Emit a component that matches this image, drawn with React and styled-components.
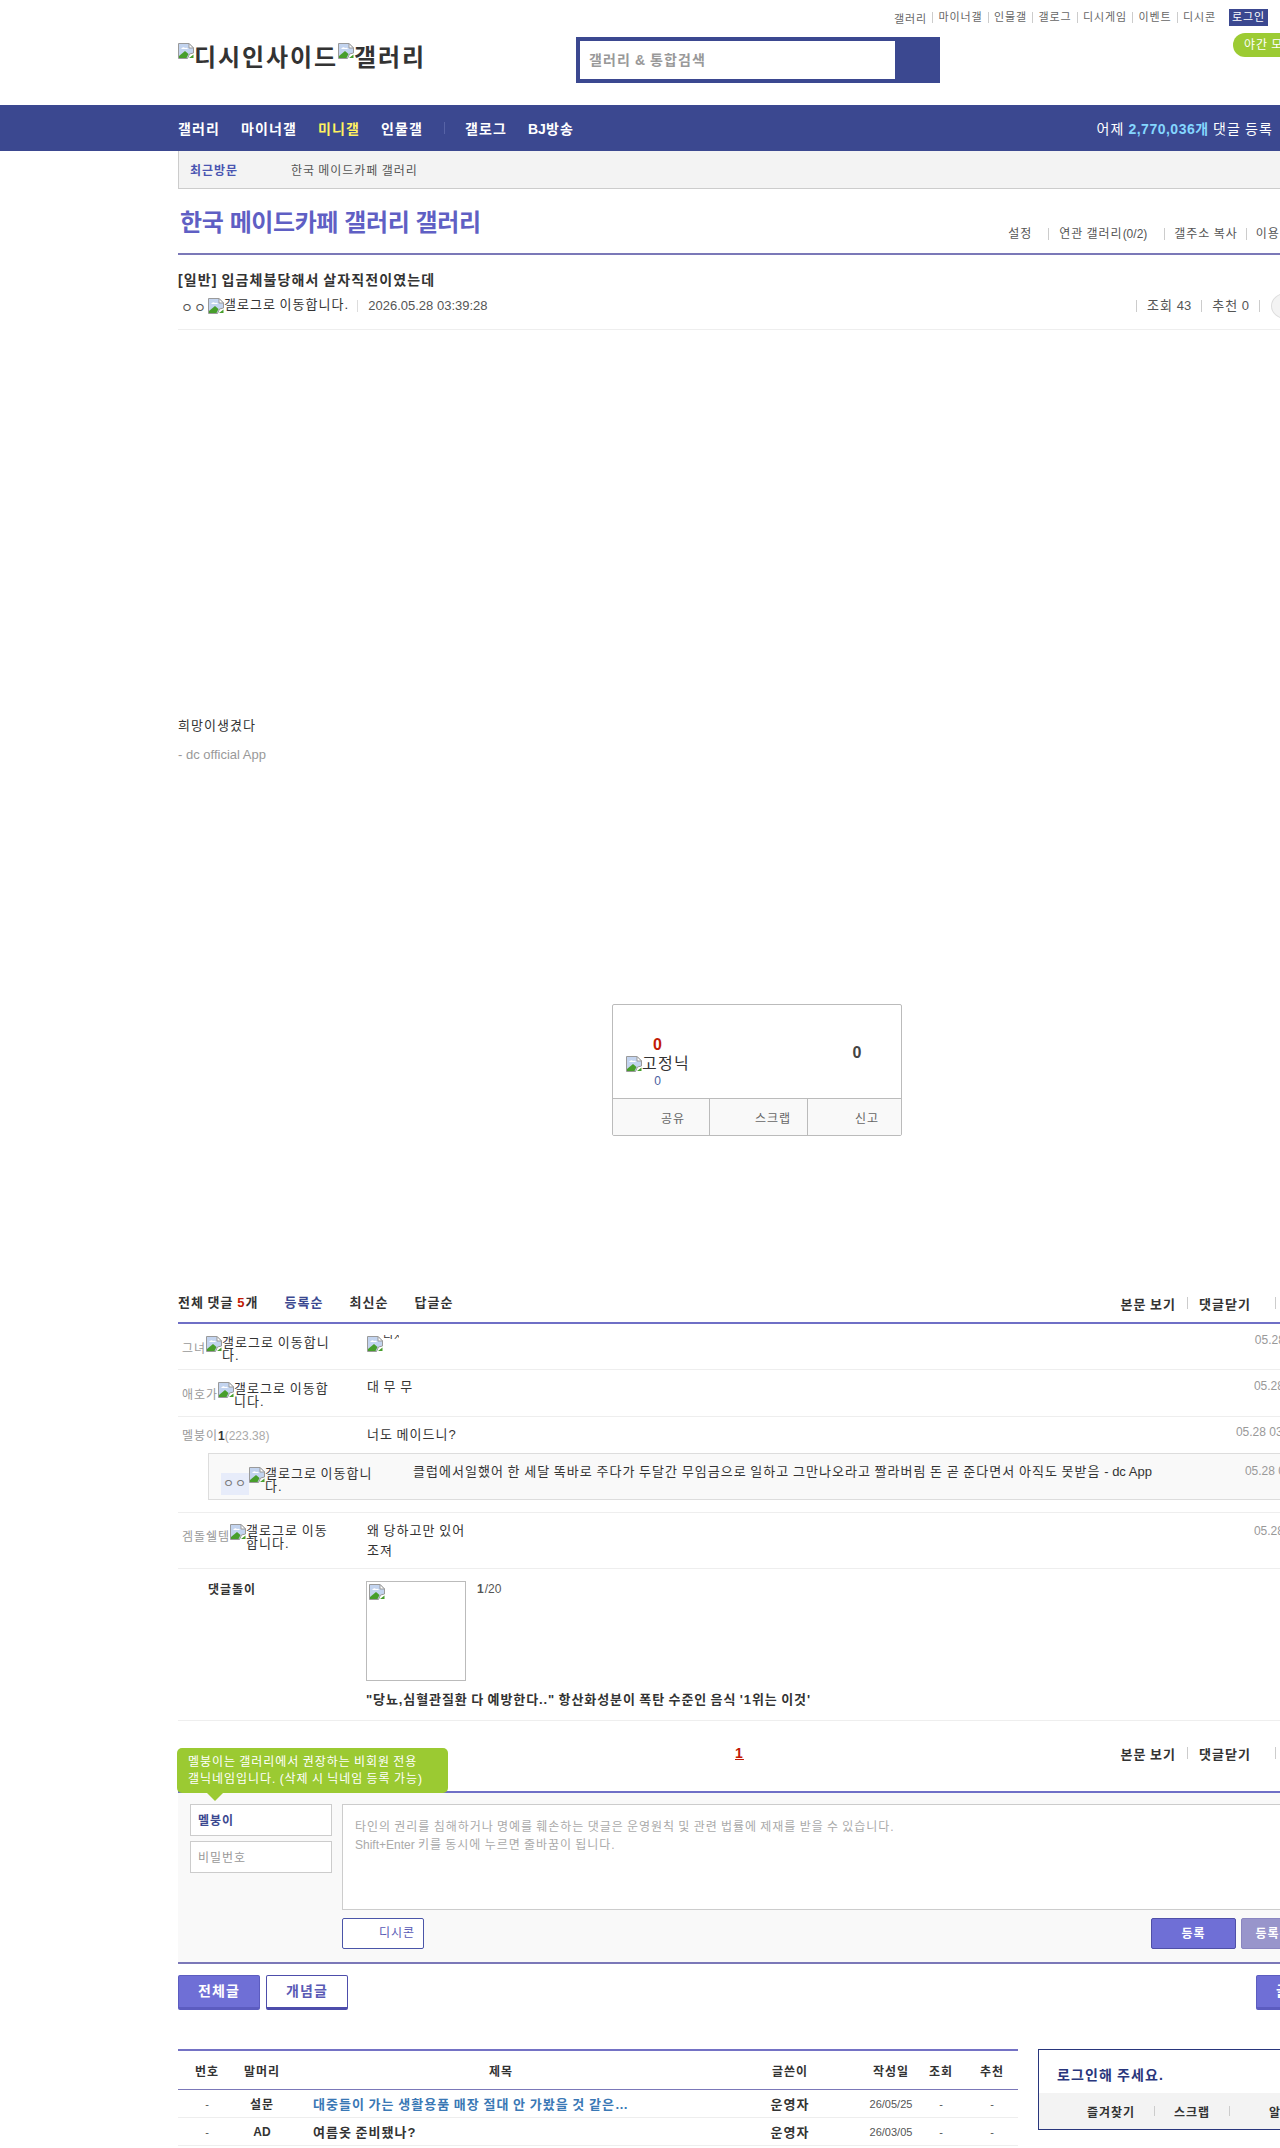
import React from 'react';
import styled, { createGlobalStyle } from 'styled-components';

const GlobalStyle = createGlobalStyle`
    html, body {
        margin: 0;
        padding: 0;
        background: #fff;
        height: 2148px;
        overflow: hidden;
    }
    body {
        font-family: "Liberation Sans", "Noto Sans CJK KR", sans-serif;
        font-size: 12px;
        color: #333;
    }
    /* hangul in the reference sits on a full em, Noto's is .92 */
    * {
        letter-spacing: 0.08em;
        word-spacing: -0.08em;
    }
`;

const Latin = styled.span`
    letter-spacing: 0;
    word-spacing: 0;
`;

const Page = styled.div`
    width: 1280px;
    height: 2148px;
    overflow: hidden;
`;

const Wrap = styled.div`
    width: 1160px;
    margin-left: 178px;
`;

const Header = styled.header`
    height: 105px;
    position: relative;
`;

const TopLinks = styled.ul`
    list-style: none;
    margin: 0;
    padding: 9px 0 0 0;
    width: 1090px;
    height: 17px;
    display: flex;
    align-items: center;
    justify-content: flex-end;
    font-size: 11px;
    color: #666;

    li + li {
        margin-left: 5px;
        padding-left: 5.5px;
        border-left: 1px solid #ccc;
        line-height: 11px;
    }
`;

const LoginButton = styled.span`
    background: #3b4890;
    color: #fff;
    font-size: 11px;
    width: 39px;
    height: 17px;
    line-height: 17px;
    text-align: center;
    margin-left: 13px;
`;

const HeaderMain = styled.div`
    display: flex;
    align-items: flex-start;
    padding-top: 11px;
`;

const Logo = styled.h1`
    margin: 6px 0 0;
    width: 398px;
    display: flex;
    align-items: flex-start;
    font-size: 24px;
    font-weight: bold;
    line-height: 30px;
    color: #333;
`;

const SearchBox = styled.div`
    width: 364px;
    height: 46px;
    box-sizing: border-box;
    background: #3b4890;
    padding: 4px 45px 4px 4px;
`;

const SearchInput = styled.div`
    height: 38px;
    background: #fff;
    padding-left: 9px;
    line-height: 38px;
    font-size: 14px;
    font-weight: bold;
    color: #999;
`;

const NightPill = styled.span`
    position: absolute;
    left: 1055px;
    top: 33px;
    width: 90px;
    height: 24px;
    line-height: 24px;
    padding-left: 11px;
    box-sizing: border-box;
    border-radius: 12px;
    background: #9ccb33;
    color: #fff;
    font-size: 12px;
    white-space: nowrap;
`;

const NavBar = styled.nav`
    height: 46px;
    background: #3b4890;
`;

const NavInner = styled(Wrap)`
    height: 46px;
    display: flex;
    align-items: center;
    font-size: 14px;
    font-weight: bold;
    color: #fff;
`;

const NavItem = styled.span`
    margin-right: 21px;
    color: ${(p) => (p.$active ? '#fff25f' : '#fff')};
`;

const NavDivider = styled.span`
    width: 1px;
    height: 12px;
    background: #5763a6;
    margin-right: 20px;
`;

const NavStat = styled.div`
    margin-left: auto;
    margin-right: 65px;
    font-weight: normal;
    white-space: nowrap;

    b {
        color: #84d6ff;
    }
`;

const StatNumber = styled.span`
    letter-spacing: 0.5px;
`;

const RecentBar = styled.div`
    height: 37px;
    background: #f3f3f3;
    border-left: 1px solid #ccc;
    border-bottom: 1px solid #ccc;
    display: flex;
    align-items: center;
    padding-left: 11px;
    color: #555;
    box-sizing: content-box;

    b {
        width: 101px;
        color: #4a55b1;
    }
`;

const GalleryHead = styled.div`
    height: 66px;
    box-sizing: border-box;
    border-bottom: 2px solid #7b78b8;
    display: flex;
    align-items: flex-start;
    justify-content: space-between;
`;

const GalleryTitle = styled.h2`
    margin: 16px 0 0 2px;
    font-size: 24px;
    line-height: 36px;
    letter-spacing: -0.4px;
    word-spacing: 0;
    color: #5f5fc4;
`;

const GalleryLinks = styled.div`
    display: flex;
    margin-top: 39px;
    margin-right: 31px;
    font-size: 12px;
    color: #555;
    line-height: 16px;
    white-space: nowrap;
`;

const BarLink = styled.span`
    height: 12px;
    margin-left: ${(p) => p.$gap || 10}px;
    padding-left: ${(p) => p.$pad || 10}px;
    border-left: 1px solid #ccc;
    line-height: 12px;
    align-self: center;

    &:first-child {
        margin-left: 0;
    }
`;

const GalleryLink = styled(BarLink)`
    &:first-child {
        border-left: 0;
        padding-left: 0;
    }
`;

const PostHead = styled.div`
    height: 75px;
    box-sizing: border-box;
    border-bottom: 1px solid #eee;
`;

const PostTitle = styled.h3`
    margin: 0;
    padding-top: 15px;
    font-size: 14px;
    line-height: 20px;
    color: #333;
`;

const PostMeta = styled.div`
    margin-top: 7px;
    display: flex;
    align-items: center;
    height: 18px;
    color: #555;
    font-size: 13px;
`;

const Writer = styled.span`
    display: flex;
    align-items: center;
    padding-left: 3px;
    gap: 1px;
`;

const PostDate = styled.span`
    margin-left: 8px;
    padding-left: 10px;
    border-left: 1px solid #ddd;
    line-height: 12px;
    letter-spacing: 0;
    word-spacing: 0;
`;

const PostStats = styled.div`
    margin-left: auto;
    display: flex;
    align-items: center;
    margin-right: 37px;
`;

const RoundButton = styled.span`
    width: 28px;
    height: 24px;
    margin-left: 10px;
    border: 1px solid #ddd;
    border-radius: 50%;
    background: #f3f3f3;
`;

const PostBody = styled.div`
    height: 675px;
    box-sizing: border-box;
    padding-top: 386px;
    font-size: 13px;
`;

const PostLine = styled.p`
    margin: 0 0 10px;
    line-height: 19px;
    color: ${(p) => (p.$muted ? '#999' : '#333')};
    letter-spacing: ${(p) => (p.$muted ? '0' : '0.08em')};
    word-spacing: 0;
`;

const RecommendBox = styled.div`
    width: 290px;
    height: 132px;
    box-sizing: border-box;
    margin-left: 434px;
    margin-top: -1px;
    border: 1px solid #bbb;
    border-radius: 2px;
    display: flex;
    flex-direction: column;
    overflow: hidden;
`;

const RecommendTop = styled.div`
    height: 93px;
    box-sizing: border-box;
    display: grid;
    grid-template-columns: 145px 1fr;
    padding-top: 30px;
`;

const VoteColumn = styled.div`
    display: flex;
    flex-direction: column;
    align-items: flex-start;
    padding-left: 13px;
    text-align: center;
`;

const VoteCount = styled.b`
    width: 64px;
    font-size: 16px;
    line-height: 20px;
    color: #c21a05;
`;

const VoteNick = styled.span`
    display: flex;
    align-items: center;
    font-size: 16px;
    line-height: 18px;
    color: #333;
`;

const VoteSub = styled.span`
    width: 64px;
    font-size: 12px;
    line-height: 16px;
    color: #4a5ea0;
`;

const DownCount = styled.b`
    text-align: center;
    font-size: 16px;
    line-height: 20px;
    padding: 8px 0 0 56px;
    color: #444;
`;

const RecommendBottom = styled.div`
    flex: 1;
    display: grid;
    grid-template-columns: 96px 98px 1fr;
    background: #f9f9f9;
    border-top: 1px solid #bbb;
    color: #666;
    font-size: 12px;
`;

const ShareCell = styled.div`
    display: flex;
    align-items: center;
    justify-content: flex-end;
    padding-right: ${(p) => p.$pad}px;
    & + & {
        border-left: 1px solid #bbb;
    }
`;

const CommentHead = styled.div`
    height: 188px;
    box-sizing: border-box;
    padding-top: 157px;
    display: flex;
    align-items: flex-start;
    justify-content: space-between;
    border-bottom: 2px solid #6f6fc6;
`;

const SortBar = styled.div`
    display: flex;
    font-size: 13px;
    font-weight: bold;
    line-height: 20px;
    color: #333;

    em {
        font-style: normal;
        color: #c21a05;
    }
`;

const SortItem = styled.span`
    margin-left: 26px;
    color: ${(p) => (p.$active ? '#3b4890' : '#333')};
`;

const CommentTools = styled.div`
    display: flex;
    align-items: center;
    height: 20px;
    margin-right: 51px;
    font-size: 13px;
    font-weight: bold;
    white-space: nowrap;
`;

const ToolDivider = styled.span`
    width: 1px;
    height: 12px;
    background: #ccc;
    margin: 0 ${(p) => p.$right || 11}px 0 ${(p) => p.$left || 11}px;
`;

const CommentRow = styled.div`
    display: grid;
    grid-template-columns: 189px 1fr auto;
    height: ${(p) => p.$height}px;
    box-sizing: border-box;
    padding-top: ${(p) => p.$top || 12}px;
    border-bottom: ${(p) => (p.$flat ? '0' : '1px solid #eee')};
    font-size: 13px;
`;

const NickCell = styled.div`
    width: 153px;
    display: flex;
    align-items: flex-start;
    padding-left: 4px;
    box-sizing: border-box;
    color: #999;
`;

const NickName = styled.span`
    flex: none;
    padding-top: ${(p) => p.$drop ?? 5}px;
    line-height: 16px;
    font-size: 12px;

    b {
        color: #333;
        letter-spacing: 0;
    }
    small {
        font-size: 12px;
        letter-spacing: 0;
        color: #aaa;
    }
`;

const AltImage = styled.span`
    display: flex;
    align-items: flex-start;
    min-width: 0;
    color: #333;
    font-size: 13px;
    line-height: 13px;
    svg {
        flex: none;
    }
`;

const CommentText = styled.div`
    margin-top: -${(p) => p.$lift ?? 5}px;
    font-size: 13px;
    line-height: 20px;
    color: #333;
`;

const DcconAlt = styled.div`
    display: flex;
    align-items: flex-start;
`;

const DcconAltText = styled.span`
    width: 16px;
    height: 4px;
    overflow: hidden;
    font-size: 11px;
    line-height: 2px;
    white-space: nowrap;
    margin-top: -1px;
    color: #333;
`;

const CommentDate = styled.span`
    margin-top: -${(p) => p.$lift ?? 4}px;
    padding-right: ${(p) => p.$inset || 4}px;
    font-size: 12px;
    line-height: 16px;
    letter-spacing: 0;
    word-spacing: 0;
    color: #999;
    white-space: nowrap;
`;

const ReplyList = styled.div`
    height: 60px;
    border-bottom: 1px solid #eee;
    box-sizing: border-box;
    padding-left: 30px;
`;

const ReplyBox = styled.div`
    height: 47px;
    box-sizing: border-box;
    border: 1px solid #ddd;
    background: #f9f9f9;
    display: grid;
    grid-template-columns: 204px 1fr auto;
    padding-top: 13px;
`;

const ReplyNick = styled.div`
    display: flex;
    align-items: flex-start;
    padding-left: 12px;
    width: 166px;
    box-sizing: border-box;
`;

const GonnickBadge = styled.span`
    flex: none;
    width: 28px;
    height: 22px;
    margin-top: 6px;
    background: #e7ecfa;
    color: #777;
    text-align: center;
    font-size: 12px;
    line-height: 22px;
`;

const DolRow = styled.div`
    height: 152px;
    box-sizing: border-box;
    border-bottom: 1px solid #eee;
    display: grid;
    padding: 12px 0 0 30px;
    grid-template-columns: 158px 1fr;
`;

const DolName = styled.b`
    font-size: 12px;
    line-height: 18px;
    color: #333;
`;

const DolTop = styled.div`
    display: flex;
    color: #555;
    line-height: 16px;
`;

const DolThumb = styled.div`
    width: 100px;
    height: 100px;
    box-sizing: border-box;
    border: 1px solid #bbb;
    padding: 2px;
    margin-right: 11px;
`;

const DolHeadline = styled.div`
    margin-top: 9px;
    font-size: 13px;
    font-weight: bold;
    line-height: 20px;
    letter-spacing: 0.07em;
    color: #333;
`;

const PagerRow = styled.div`
    height: 72px;
    box-sizing: border-box;
    padding-top: 22px;
    position: relative;
    display: flex;
    border-bottom: 2px solid #6f6fc6;
`;

const PagerCurrent = styled.b`
    margin-left: 557px;
    font-size: 14px;
    line-height: 20px;
    color: #c21a05;
    text-decoration: underline;
`;

const PagerTools = styled(CommentTools)`
    margin-left: auto;
`;

const Tooltip = styled.div`
    position: absolute;
    left: -1px;
    top: 27px;
    width: 271px;
    height: 45px;
    box-sizing: border-box;
    padding: 6px 11px;
    background: #9bca32;
    border-radius: 5px;
    color: #fff;
    font-size: 12px;
    line-height: 17px;
    white-space: nowrap;

    &::after {
        content: '';
        position: absolute;
        left: 30px;
        top: 45px;
        border: 8px solid transparent;
        border-top-color: #9bca32;
        border-bottom: 0;
    }
`;

const WriteForm = styled.div`
    height: 171px;
    box-sizing: border-box;
    background: #f9f9f9;
    border-bottom: 2px solid #7b78b8;
    padding: 11px 12px 0;
    display: grid;
    grid-template-columns: 142px 1fr;
    column-gap: 10px;
`;

const FormSide = styled.div`
    display: flex;
    flex-direction: column;
    gap: 5px;
`;

const FormField = styled.div`
    height: 32px;
    box-sizing: border-box;
    border: 1px solid #ccc;
    background: #fff;
    padding-left: 7px;
    line-height: 32px;
    color: ${(p) => (p.$filled ? '#3b4890' : '#999')};
    font-weight: ${(p) => (p.$filled ? 'bold' : 'normal')};
`;

const FormMain = styled.div`
    display: flex;
    flex-direction: column;
`;

const TextBox = styled.div`
    height: 106px;
    box-sizing: border-box;
    border: 1px solid #ccc;
    background: #fff;
    padding: 13px 12px;
    font-size: 12px;
    line-height: 18px;
    color: #aaa;
`;

const FormActions = styled.div`
    display: flex;
    margin-top: 8px;
    gap: 5px;
`;

const DcconButton = styled.span`
    width: 82px;
    height: 31px;
    box-sizing: border-box;
    margin-right: auto;
    border: 1px solid #4a55a8;
    border-radius: 2px;
    background: #fff;
    color: #5a5ab5;
    text-align: right;
    padding-right: 8px;
    line-height: 29px;
`;

const SubmitButton = styled.span`
    width: 85px;
    height: 31px;
    box-sizing: border-box;
    border: 1px solid ${(p) => (p.$soft ? '#8a86c0' : '#4f4fa8')};
    border-radius: 2px;
    background: ${(p) => (p.$soft ? '#9895cb' : '#6f6fd6')};
    color: #fff;
    text-align: center;
    line-height: 30px;
    font-weight: bold;
    white-space: nowrap;
`;

const ListTabs = styled.div`
    display: flex;
    gap: 6px;
    height: 85px;
    padding-top: 11px;
    box-sizing: border-box;
`;

const TabButton = styled.span`
    width: 82px;
    height: 35px;
    box-sizing: border-box;
    border: 1px solid ${(p) => (p.$ghost ? '#4d4dab' : '#5c5cc0')};
    border-bottom-width: 3px;
    border-radius: 2px;
    background: ${(p) => (p.$ghost ? '#fff' : '#6f6fd6')};
    color: ${(p) => (p.$ghost ? '#5a5ab5' : '#fff')};
    text-align: center;
    font-size: 14px;
    font-weight: bold;
    line-height: 31px;
    margin-left: ${(p) => p.$far || 0}px;
    flex: none;
`;

const BottomArea = styled.div`
    display: grid;
    grid-template-columns: 840px 1fr;
    column-gap: 20px;
`;

const ListHead = styled.div`
    display: grid;
    grid-template-columns: 58px 52px 426px 152px 50px 50px 52px;
    height: 41px;
    box-sizing: border-box;
    border-top: 2px solid #7472c5;
    border-bottom: 1px solid #7b78b8;
    align-items: center;
    text-align: center;
    font-size: 12px;
    font-weight: bold;
    color: #333;
`;

const ListRow = styled.div`
    display: grid;
    grid-template-columns: 58px 52px 426px 152px 50px 50px 52px;
    height: 28px;
    box-sizing: border-box;
    border-bottom: 1px solid #eee;
    align-items: center;
    text-align: center;
    font-size: 11px;
    color: #555;
`;

const ListSub = styled.b`
    font-size: 12px;
    color: #333;
`;

const ListTitle = styled.span`
    text-align: left;
    padding-left: 25px;
    font-size: 13px;
    font-weight: bold;
    white-space: nowrap;
    overflow: hidden;
    text-overflow: ellipsis;
    color: ${(p) => (p.$notice ? '#3a78b5' : '#333')};
`;

const ListWriter = styled.b`
    font-size: 13px;
    color: #333;
`;

const ListCell = styled.span`
    letter-spacing: 0;
`;

const LoginPanel = styled.div`
    height: 81px;
    box-sizing: border-box;
    border: 1px solid #29367c;
    display: flex;
    flex-direction: column;
`;

const LoginTitle = styled.div`
    height: 43px;
    padding: 14px 0 0 18px;
    box-sizing: border-box;
    font-size: 14px;
    font-weight: bold;
    color: #29367c;
`;

const LoginTools = styled.div`
    flex: 1;
    background: #f3f3f3;
    display: flex;
    align-items: center;
    padding-left: 48px;
    font-weight: bold;
    color: #333;
    white-space: nowrap;
`;

const LoginDivider = styled.span`
    width: 1px;
    height: 10px;
    background: #ccc;
    margin: 0 ${(p) => p.$after || 19}px 0 19px;
`;

// Chrome's broken image glyph
function Broken() {
    return (
        <svg width="16" height="16" viewBox="0 0 16 16" aria-hidden="true">
            <path d="M.5.5h10.5l4.5 4.5v5l-4 1-2 4.500H.5z" fill="#c3d4ef" stroke="#9a9a9a" strokeWidth="1" />
            <path d="M11 .5v4.500h4.500z" fill="#fff" stroke="#9a9a9a" strokeWidth="1" />
            <path d="M3 6q2-3 4-1 2-1 3 1z" fill="#fff" />
            <path d="M1 15v-2l6-5 3.500 3-2 4z" fill="#479e2b" />
            <path d="M11 15l4.500-3.500v3.500z" fill="#479e2b" />
        </svg>
    );
}

function GallogAlt() {
    return (
        <AltImage>
            <Broken />
            <span>갤로그로 이동합니다.</span>
        </AltImage>
    );
}

export default function App() {
    return (
        <Page>
            <GlobalStyle />
            <Wrap>
                <Header>
                    <TopLinks>
                        <li>갤러리</li>
                        <li>마이너갤</li>
                        <li>인물갤</li>
                        <li>갤로그</li>
                        <li>디시게임</li>
                        <li>이벤트</li>
                        <li>디시콘</li>
                        <LoginButton>로그인</LoginButton>
                    </TopLinks>
                    <HeaderMain>
                        <Logo>
                            <Broken />
                            <span>디시인사이드</span>
                            <Broken />
                            <span>갤러리</span>
                        </Logo>
                        <SearchBox>
                            <SearchInput>갤러리 &amp; 통합검색</SearchInput>
                        </SearchBox>
                    </HeaderMain>
                    <NightPill>야간 모드</NightPill>
                </Header>
            </Wrap>
            <NavBar>
                <NavInner>
                    <NavItem>갤러리</NavItem>
                    <NavItem>마이너갤</NavItem>
                    <NavItem $active>미니갤</NavItem>
                    <NavItem>인물갤</NavItem>
                    <NavDivider />
                    <NavItem>갤로그</NavItem>
                    <NavItem><Latin>BJ</Latin>방송</NavItem>
                    <NavStat>어제 <b><StatNumber>2,770,036</StatNumber>개</b> 댓글 등록</NavStat>
                </NavInner>
            </NavBar>
            <Wrap>
                <RecentBar>
                    <b>최근방문</b>
                    <span>한국 메이드카페 갤러리</span>
                </RecentBar>
                <GalleryHead>
                    <GalleryTitle>한국 메이드카페 갤러리 갤러리</GalleryTitle>
                    <GalleryLinks>
                        <GalleryLink>설정</GalleryLink>
                        <GalleryLink $gap={16}>연관 갤러리<Latin>(0/2)</Latin></GalleryLink>
                        <GalleryLink $gap={17} $pad={9}>갤주소 복사</GalleryLink>
                        <GalleryLink $gap={8} $pad={9}>이용 안내</GalleryLink>
                    </GalleryLinks>
                </GalleryHead>
                <PostHead>
                    <PostTitle>[일반] 입금체불당해서 살자직전이였는데</PostTitle>
                    <PostMeta>
                        <Writer>
                            ㅇㅇ
                            <GallogAlt />
                        </Writer>
                        <PostDate>2026.05.28 03:39:28</PostDate>
                        <PostStats>
                            <BarLink>조회 <Latin>43</Latin></BarLink>
                            <BarLink>추천 <Latin>0</Latin></BarLink>
                            <BarLink $pad={1} />
                            <RoundButton />
                        </PostStats>
                    </PostMeta>
                </PostHead>
                <PostBody>
                    <PostLine>희망이생겼다</PostLine>
                    <PostLine $muted>- dc official App</PostLine>
                </PostBody>
                <RecommendBox>
                    <RecommendTop>
                        <VoteColumn>
                            <VoteCount>0</VoteCount>
                            <VoteNick>
                                <Broken />
                                고정닉
                            </VoteNick>
                            <VoteSub>0</VoteSub>
                        </VoteColumn>
                        <DownCount>0</DownCount>
                    </RecommendTop>
                    <RecommendBottom>
                        <ShareCell $pad={24}>공유</ShareCell>
                        <ShareCell $pad={16}>스크랩</ShareCell>
                        <ShareCell $pad={22}>신고</ShareCell>
                    </RecommendBottom>
                </RecommendBox>
                <CommentHead>
                    <SortBar>
                        <span>전체 댓글 <em>5</em>개</span>
                        <SortItem $active>등록순</SortItem>
                        <SortItem>최신순</SortItem>
                        <SortItem>답글순</SortItem>
                    </SortBar>
                    <CommentTools>
                        본문 보기
                        <ToolDivider />
                        댓글닫기
                        <ToolDivider $left={24} />
                    </CommentTools>
                </CommentHead>
                <CommentRow $height={46}>
                    <NickCell>
                        <NickName>그녀</NickName>
                        <GallogAlt />
                    </NickCell>
                    <DcconAlt>
                        <Broken />
                        <DcconAltText>디시콘</DcconAltText>
                    </DcconAlt>
                    <CommentDate>05.28 03:42:11</CommentDate>
                </CommentRow>
                <CommentRow $height={47}>
                    <NickCell>
                        <NickName>애호가</NickName>
                        <GallogAlt />
                    </NickCell>
                    <CommentText>대 무 무</CommentText>
                    <CommentDate>05.28 03:43:40</CommentDate>
                </CommentRow>
                <CommentRow $height={36} $top={11} $flat>
                    <NickCell>
                        <NickName $drop={0}>멜붕이<b>1</b><small>(223.38)</small></NickName>
                    </NickCell>
                    <CommentText $lift={3}>너도 메이드니?</CommentText>
                    <CommentDate $inset={22}>05.28 03:44:52</CommentDate>
                </CommentRow>
                <ReplyList>
                    <ReplyBox>
                        <ReplyNick>
                            <GonnickBadge>ㅇㅇ</GonnickBadge>
                            <GallogAlt />
                        </ReplyNick>
                        <CommentText>클럽에서일했어 한 세달 똑바로 주다가 두달간 무임금으로 일하고 그만나오라고 짤라버림 돈 곧 준다면서 아직도 못받음 <Latin>- dc App</Latin></CommentText>
                        <CommentDate $inset={12}>05.28 03:47:05</CommentDate>
                    </ReplyBox>
                </ReplyList>
                <CommentRow $height={56} $top={11}>
                    <NickCell>
                        <NickName>겜돌쉘템</NickName>
                        <GallogAlt />
                    </NickCell>
                    <CommentText $lift={3}>
                        왜 당하고만 있어
                        <br />
                        조져
                    </CommentText>
                    <CommentDate $lift={1}>05.28 03:50:18</CommentDate>
                </CommentRow>
                <DolRow>
                    <DolName>댓글돌이</DolName>
                    <div>
                        <DolTop>
                            <DolThumb><Broken /></DolThumb>
                            <Latin><b>1</b>/20</Latin>
                        </DolTop>
                        <DolHeadline>"당뇨,심혈관질환 다 예방한다.." 항산화성분이 폭탄 수준인 음식 '1위는 이것'</DolHeadline>
                    </div>
                </DolRow>
                <PagerRow>
                    <PagerCurrent>1</PagerCurrent>
                    <PagerTools>
                        본문 보기
                        <ToolDivider />
                        댓글닫기
                        <ToolDivider $left={24} />
                    </PagerTools>
                    <Tooltip>
                        멜붕이는 갤러리에서 권장하는 비회원 전용
                        <br />
                        갤닉네임입니다. (삭제 시 닉네임 등록 가능)
                    </Tooltip>
                </PagerRow>
                <WriteForm>
                    <FormSide>
                        <FormField $filled>멜붕이</FormField>
                        <FormField>비밀번호</FormField>
                    </FormSide>
                    <FormMain>
                        <TextBox>
                            타인의 권리를 침해하거나 명예를 훼손하는 댓글은 운영원칙 및 관련 법률에 제재를 받을 수 있습니다.
                            <br />
                            <Latin>Shift+Enter</Latin> 키를 동시에 누르면 줄바꿈이 됩니다.
                        </TextBox>
                        <FormActions>
                            <DcconButton>디시콘</DcconButton>
                            <SubmitButton>등록</SubmitButton>
                            <SubmitButton $soft>등록+추천</SubmitButton>
                        </FormActions>
                    </FormMain>
                </WriteForm>
                <ListTabs>
                    <TabButton>전체글</TabButton>
                    <TabButton $ghost>개념글</TabButton>
                    <TabButton $far={902}>글쓰기</TabButton>
                </ListTabs>
                <BottomArea>
                    <div>
                        <ListHead>
                            <span>번호</span>
                            <span>말머리</span>
                            <span>제목</span>
                            <span>글쓴이</span>
                            <span>작성일</span>
                            <span>조회</span>
                            <span>추천</span>
                        </ListHead>
                        <ListRow>
                            <ListCell>-</ListCell>
                            <ListSub>설문</ListSub>
                            <ListTitle $notice>대중들이 가는 생활용품 매장 절대 안 가봤을 것 같은…</ListTitle>
                            <ListWriter>운영자</ListWriter>
                            <ListCell>26/05/25</ListCell>
                            <ListCell>-</ListCell>
                            <ListCell>-</ListCell>
                        </ListRow>
                        <ListRow>
                            <ListCell>-</ListCell>
                            <ListSub><Latin>AD</Latin></ListSub>
                            <ListTitle>여름옷 준비됐나?</ListTitle>
                            <ListWriter>운영자</ListWriter>
                            <ListCell>26/03/05</ListCell>
                            <ListCell>-</ListCell>
                            <ListCell>-</ListCell>
                        </ListRow>
                    </div>
                    <LoginPanel>
                        <LoginTitle>로그인해 주세요.</LoginTitle>
                        <LoginTools>
                            즐겨찾기
                            <LoginDivider />
                            스크랩
                            <LoginDivider $after={39} />
                            알림
                        </LoginTools>
                    </LoginPanel>
                </BottomArea>
            </Wrap>
        </Page>
    );
}
